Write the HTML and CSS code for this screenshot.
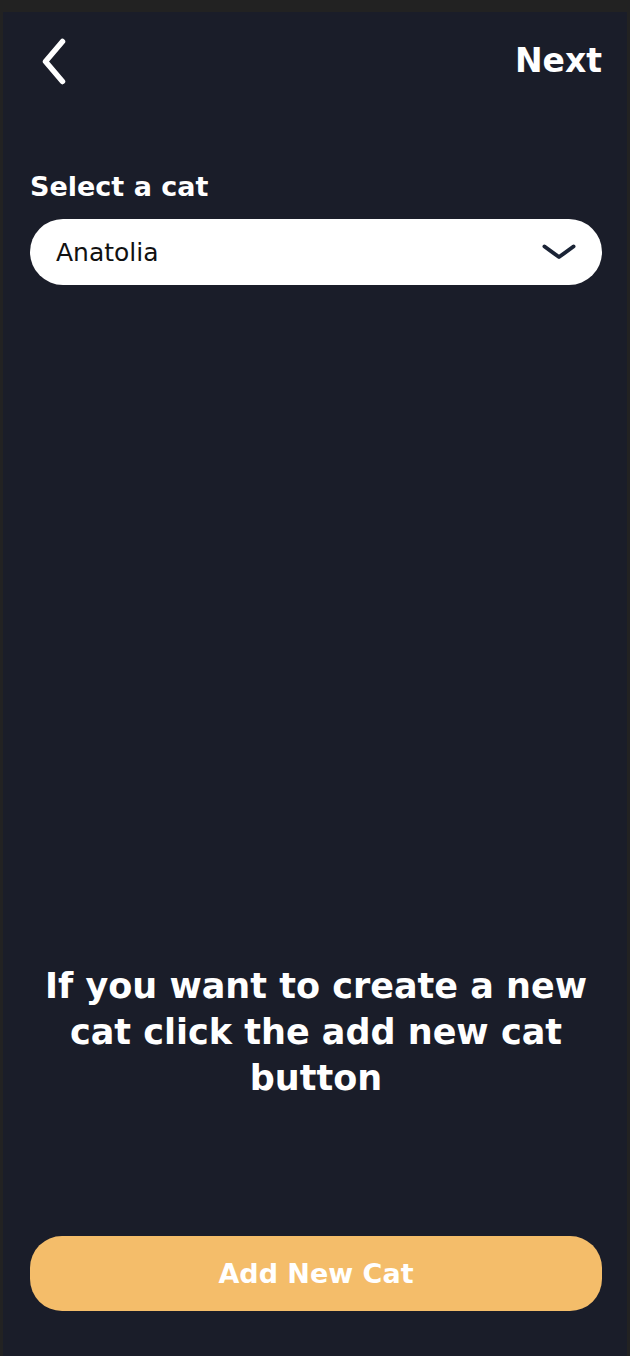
FILE: index.html
```html
<!DOCTYPE html>
<html lang="en">
<head>
<meta charset="utf-8">
<title>Select a cat</title>
<link rel="stylesheet" href="styles.css">
</head>
<body>
<div class="frame">
  <header class="topbar">
    <button class="back" aria-label="Back">
      <svg class="back-icon" viewBox="0 0 24 47" fill="none">
        <path d="M20.5 3.5 L3.5 23.5 L20.5 43.5" stroke="#ffffff" stroke-width="5.5" stroke-linecap="round" stroke-linejoin="round"/>
      </svg>
    </button>
    <span class="next">Next</span>
  </header>

  <label class="label">Select a cat</label>
  <div class="select">
    <span class="select-value">Anatolia</span>
    <svg class="caret" viewBox="0 0 34 16" fill="none">
      <path d="M2.5 2.5 L17 13 L31.5 2.5" stroke="#1b2436" stroke-width="4" stroke-linecap="round" stroke-linejoin="round"/>
    </svg>
  </div>

  <div class="spacer"></div>

  <p class="hint">If you want to create a new cat click the add new cat button</p>

  <button class="add">Add New Cat</button>
</div>
</body>
</html>
```

FILE: styles.css
```css
html, body {
  margin: 0;
  padding: 0;
  background: #222222;
}

body {
  font-family: "DejaVu Sans", "Liberation Sans", sans-serif;
  color: #ffffff;
}

.frame {
  box-sizing: border-box;
  margin: 12px 3px 0 3px;
  height: 1344px;
  background: #1a1d29;
  display: flex;
  flex-direction: column;
  padding: 26px 25px 45px 27px;
}

.topbar {
  display: flex;
  align-items: center;
  justify-content: space-between;
  height: 47px;
}

.back {
  background: none;
  border: 0;
  padding: 0;
  margin-left: 12px;
  display: flex;
}

.back-icon {
  display: block;
  width: 24px;
  height: 47px;
}

.next {
  font-size: 33px;
  font-weight: 700;
  margin-top: -2px;
}

.label {
  display: block;
  margin-top: 86px;
  font-size: 27px;
  font-weight: 700;
  line-height: 32px;
}

.select {
  margin-top: 16px;
  height: 66px;
  border-radius: 33px;
  background: #ffffff;
  display: flex;
  align-items: center;
  justify-content: space-between;
  padding: 0 26px 0 26px;
}

.select-value {
  color: #111111;
  font-size: 25px;
}

.caret {
  display: block;
  width: 34px;
  height: 16px;
}

.spacer {
  flex: 1;
}

.hint {
  margin: 0 0 135px 0;
  text-align: center;
  font-size: 35px;
  font-weight: 700;
  line-height: 46px;
}

.add {
  height: 75px;
  border: 0;
  border-radius: 32px;
  background: #f4bd6a;
  color: #ffffff;
  font-family: "DejaVu Sans", "Liberation Sans", sans-serif;
  font-size: 27px;
  font-weight: 700;
  padding: 0;
}
```
